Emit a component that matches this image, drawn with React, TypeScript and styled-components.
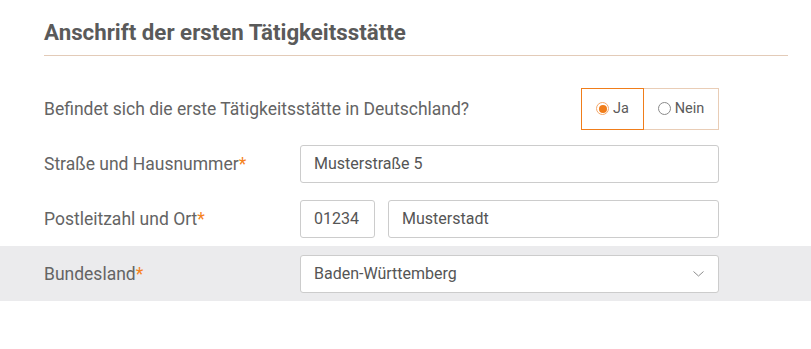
import React, { useState } from "react";
import styled, { createGlobalStyle } from "styled-components";

const GlobalStyle = createGlobalStyle`
  body {
    margin: 0;
    background: #ffffff;
    font-family: Roboto, "Liberation Sans", Arial, sans-serif;
  }
  * {
    box-sizing: border-box;
  }
`;

const Section = styled.section`
  width: 811px;
  padding-bottom: 48px;
`;

const Heading = styled.h2`
  margin: 19px 23px 25px 44px;
  padding-bottom: 9px;
  border-bottom: 1px solid #e3cbb8;
  font-size: 22.3px;
  line-height: 27px;
  font-weight: 700;
  color: #5a5a5a;
`;

const Row = styled.div<{ $shaded?: boolean }>`
  display: grid;
  grid-template-columns: 256px 419px;
  align-items: center;
  height: 55px;
  padding: 0 44px;
  background: ${(p) => (p.$shaded ? "#ebebed" : "transparent")};
`;

const Label = styled.label`
  font-size: 17.5px;
  color: #646464;
  white-space: nowrap;
`;

const Required = styled.span`
  color: #f58220;
`;

const Fields = styled.div<{ $end?: boolean }>`
  display: flex;
  gap: 13px;
  justify-content: ${(p) => (p.$end ? "flex-end" : "flex-start")};
`;

const TextInput = styled.input<{ $width?: number }>`
  height: 38px;
  width: ${(p) => (p.$width ? `${p.$width}px` : "auto")};
  flex: ${(p) => (p.$width ? "none" : "1")};
  min-width: 0;
  padding: 0 13px;
  border: 1px solid #cccccc;
  border-radius: 3px;
  font-family: inherit;
  font-size: 16px;
  color: #555555;
  background: #ffffff;
  outline: none;
`;

const SelectBox = styled.div`
  flex: 1;
  display: flex;
  align-items: center;
  justify-content: space-between;
  height: 38px;
  padding: 0 14px 0 13px;
  border: 1px solid #cccccc;
  border-radius: 3px;
  font-size: 16px;
  color: #555555;
  background: #ffffff;
`;

const RadioGroup = styled.div`
  display: flex;
  margin-left: -142px;
`;

const RadioOption = styled.button<{ $active: boolean; $width: number }>`
  display: flex;
  align-items: center;
  justify-content: center;
  gap: 4px;
  width: ${(p) => p.$width}px;
  height: 42px;
  padding: 0;
  border: 1px solid ${(p) => (p.$active ? "#f07d1a" : "#e9cdb6")};
  border-left-width: ${(p) => (p.$active ? "1px" : "0")};
  background: #ffffff;
  font-family: inherit;
  font-size: 14.5px;
  color: #5b5b5b;
  cursor: pointer;
`;

const RadioDot = styled.span<{ $active: boolean }>`
  display: inline-flex;
  align-items: center;
  justify-content: center;
  width: 13px;
  height: 13px;
  border-radius: 50%;
  border: 1px solid ${(p) => (p.$active ? "#f5a86a" : "#8a8a8a")};
  &::after {
    content: "";
    width: 8px;
    height: 8px;
    border-radius: 50%;
    background: ${(p) => (p.$active ? "#f07d1a" : "transparent")};
  }
`;

const Chevron = () => (
  <svg width="11" height="6" viewBox="0 0 11 6" fill="none">
    <path d="M0.5 0.5 L5.5 5 L10.5 0.5" stroke="#8c8c8c" strokeWidth="1" />
  </svg>
);

const App: React.FC = () => {
  const [inGermany, setInGermany] = useState(true);

  return (
    <>
      <GlobalStyle />
      <Section>
        <Heading>Anschrift der ersten Tätigkeitsstätte</Heading>
        <Row>
          <Label>Befindet sich die erste Tätigkeitsstätte in Deutschland?</Label>
          <Fields $end>
            <RadioGroup>
              <RadioOption
                type="button"
                $width={63}
                $active={inGermany}
                onClick={() => setInGermany(true)}
              >
                <RadioDot $active={inGermany} />
                Ja
              </RadioOption>
              <RadioOption
                type="button"
                $width={75}
                $active={!inGermany}
                onClick={() => setInGermany(false)}
              >
                <RadioDot $active={!inGermany} />
                Nein
              </RadioOption>
            </RadioGroup>
          </Fields>
        </Row>
        <Row>
          <Label>
            Straße und Hausnummer<Required>*</Required>
          </Label>
          <Fields>
            <TextInput defaultValue="Musterstraße 5" />
          </Fields>
        </Row>
        <Row>
          <Label>
            Postleitzahl und Ort<Required>*</Required>
          </Label>
          <Fields>
            <TextInput $width={75} defaultValue="01234" />
            <TextInput defaultValue="Musterstadt" />
          </Fields>
        </Row>
        <Row $shaded>
          <Label>
            Bundesland<Required>*</Required>
          </Label>
          <Fields>
            <SelectBox>
              Baden-Württemberg
              <Chevron />
            </SelectBox>
          </Fields>
        </Row>
      </Section>
    </>
  );
};

export default App;
